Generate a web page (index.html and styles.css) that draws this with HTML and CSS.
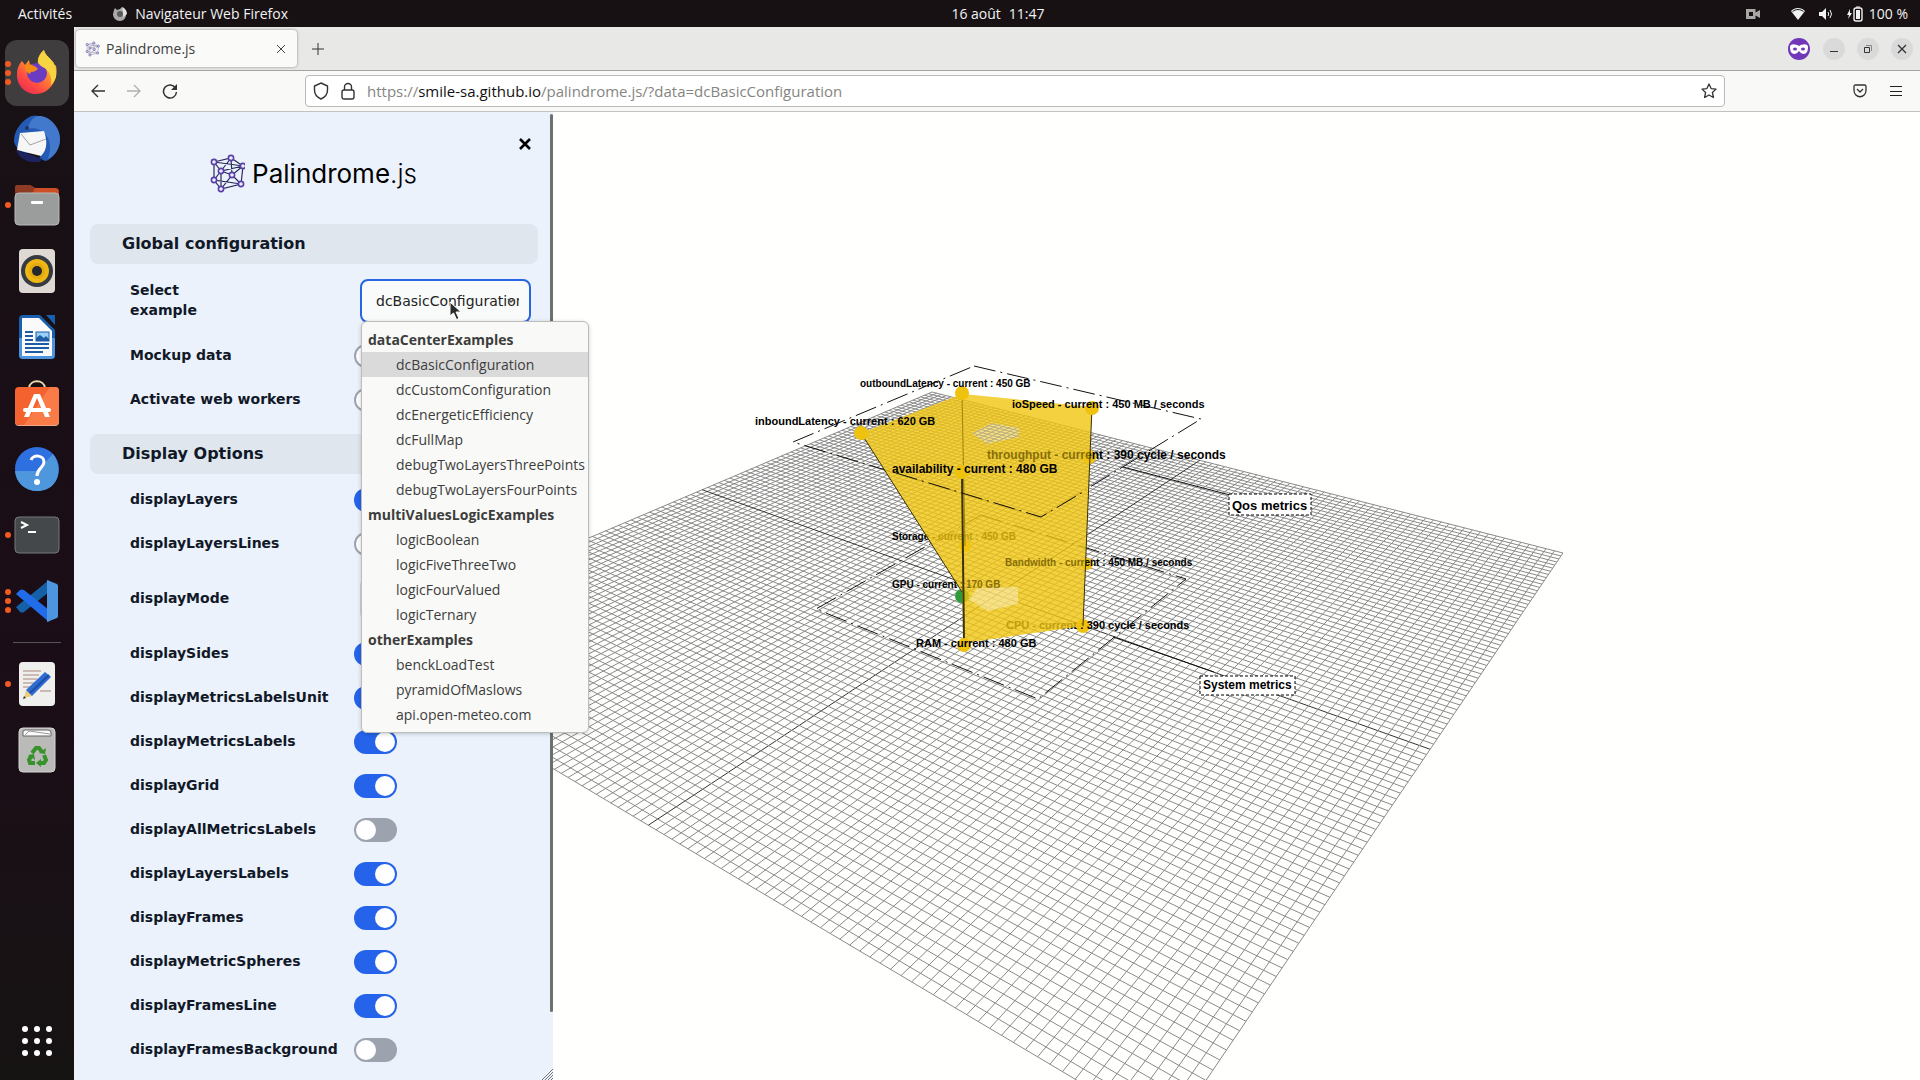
FILE: index.html
```html
<!DOCTYPE html>
<html lang="fr">
<head>
    <meta charset="utf-8">
    <title>Palindrome.js</title>
    <link rel="stylesheet" href="styles.css">
</head>
<body>
    <!-- system bar -->
    <header class="topbar">
        <div class="topbar-left">
            <button type="button" class="topbar-btn">Activités</button>
            <button type="button" class="topbar-btn topbar-app">
                <svg width="16" height="16" viewBox="0 0 16 16">
                    <path d="M2 4l1-2 2 2 3-1 2-2 1 2 3 3c1 5-2 9-6 9S1 12 1 8z" fill="#a9a9a9"/>
                    <path d="M10 1c3 1 5 4 5 7l-4 3V6z" fill="#e2e2e2"/>
                    <circle cx="8" cy="8" r="3" fill="#5b5b5b"/>
                </svg>
                Navigateur Web Firefox
            </button>
        </div>
        <button type="button" class="topbar-btn clock"><span>16 août</span><span>11:47</span></button>
        <div class="topbar-right">
            <svg class="cam" width="16" height="12" viewBox="0 0 16 12">
                <path d="M1 1h9.500v3.500L15 2v8l-4.500-2.500V11H1z" fill="#a9a8a6"/>
                <rect x="4" y="4" width="4" height="4" fill="#171114"/>
            </svg>
            <svg width="16" height="14" viewBox="0 0 16 14">
                <path d="M8 13L1 4c4-4 10-4 14 0z" fill="#f2f2f2"/>
                <path d="M2.500 4.500c3.500-2.600 7.500-2.600 11 0" fill="none" stroke="#171114"/>
            </svg>
            <svg width="16" height="14" viewBox="0 0 16 14">
                <path d="M1 5h3l4-4v12L4 9H1z" fill="#f2f2f2"/>
                <path d="M10 5q1.500 2 0 4M12 3q3 4 0 8" fill="none" stroke="#f2f2f2"/>
            </svg>
            <span class="battery">
                <svg width="17" height="16" viewBox="0 0 17 16">
                    <path d="M4 3L1 9h2l-1 4 4-6H4z" fill="#f2f2f2"/>
                    <rect x="8" y="2" width="8" height="13" rx="2" fill="none" stroke="#f2f2f2" stroke-width="1.400"/>
                    <rect x="10" y="4" width="4" height="9" fill="#f2f2f2"/>
                    <path d="M10 1h4" stroke="#f2f2f2"/>
                </svg>
                100 %
            </span>
        </div>
    </header>

    <div class="desktop">
        <nav class="dock">
            <a href="#" class="dock-item active" aria-label="Firefox">
                <span class="dots"><i></i><i></i><i></i></span>
                <svg width="44" height="48" viewBox="0 0 44 48">
                    <defs>
                        <linearGradient id="fox" x1="1" y1="0" x2="0.300" y2="1">
                            <stop offset="0" stop-color="#fde24a"/>
                            <stop offset="0.450" stop-color="#ff9a2c"/>
                            <stop offset="0.800" stop-color="#ff4a43"/>
                            <stop offset="1" stop-color="#ee3350"/>
                        </linearGradient>
                    </defs>
                    <path d="M7 12l3 4 4-5 1 5c3-1 6 0 8-1-1-6 2-11 6-14 1 5 5 7 8 11 1 1 2 1 2 3l2 2c3 13-6 28-20 28C9 45 1 35 2 24c0-4 2-9 5-12z" fill="url(#fox)"/>
                    <circle cx="22" cy="24" r="10" fill="#6b3bc2"/>
                    <path d="M10 16c4-2 8 0 11 2l2 2c-2 2-4 3-7 3l-1 2c-3-1-6-5-5-9z" fill="#f58a17"/>
                    <path d="M29 1c1 5 5 7 8 11 2 3 5 8 4 16-1 3-3 6-5 8 1-6 0-10-4-15-3-3-8-4-9-8 0-5 3-9 6-12z" fill="#f7d442"/>
                </svg>
            </a>
            <a href="#" class="dock-item" aria-label="Thunderbird">
                <svg width="48" height="50" viewBox="0 0 48 50">
                    <path d="M7 11C13 3 21 0 25 2c12 1 22 11 22 23 0 11-7 19-14 22l-7-2 4-8C15 42 4 38 1 28c0-7 2-12 6-17z" fill="#2459b4"/>
                    <path d="M25 2c10-1 22 10 22 23 0 9-5 17-12 20 2-8 4-16-2-24-4-6-12-8-18-6 1-7 5-12 10-13z" fill="#4379cc"/>
                    <path d="M7 19l24-2c3 9 4 18-3 25L4 36z" fill="#f6f6f6"/>
                    <path d="M8 20l9 11 16-6" fill="none" stroke="#a3a3a3"/>
                    <path d="M3 36l27 9-4 3C15 49 6 45 3 36z" fill="#1c2360"/>
                    <circle cx="14" cy="14" r="2" fill="#203a68"/>
                </svg>
            </a>
            <a href="#" class="dock-item" aria-label="Fichiers">
                <span class="dots"><i></i></span>
                <svg width="46" height="42" viewBox="0 0 46 42">
                    <path d="M1 12V4q0-3 3-3h12l5 3h20q4 0 4 4v8z" fill="#cc4f25"/>
                    <path d="M1 12V4q0-3 3-3h12l5 3-4 8z" fill="#8d3b25"/>
                    <rect x="1" y="9" width="44" height="32" rx="4" fill="#9b9c9c" stroke="#b9bbbb"/>
                    <rect x="17" y="17" width="12" height="3" rx="1" fill="#fff"/>
                </svg>
            </a>
            <a href="#" class="dock-item" aria-label="Rhythmbox">
                <svg width="38" height="46" viewBox="0 0 38 46">
                    <rect x="1" y="1" width="36" height="44" rx="4" fill="#dedad3"/>
                    <circle cx="19" cy="23" r="16" fill="#353b41"/>
                    <circle cx="19" cy="23" r="12" fill="#efb713"/>
                    <circle cx="19" cy="23" r="8" fill="#e5aa10"/>
                    <circle cx="19" cy="23" r="5" fill="#25282b"/>
                </svg>
            </a>
            <a href="#" class="dock-item" aria-label="LibreOffice Writer">
                <svg width="38" height="46" viewBox="0 0 38 46">
                    <path d="M5 1h17l15 15v25q0 4-4 4H5q-4 0-4-4V5q0-4 4-4z" fill="#1860ad"/>
                    <path d="M1 24v17q0 4 4 4h28q4 0 4-4V24z" fill="#4c94de"/>
                    <path d="M4 4h17l13 13v25H4z" fill="#fafafa"/>
                    <path d="M28 1h9v10z" fill="#1860ad"/>
                    <path d="M7 18h8M7 22h8M7 26h8M7 30h24M7 34h24M7 38h18" stroke="#1d5da8" stroke-width="2"/>
                    <rect x="18" y="18" width="13" height="9" fill="#9cd1f5" stroke="#1d5da8"/>
                    <path d="M18 27v-3l4-3 4 3 2-2 3 3v2z" fill="#1d5da8"/>
                </svg>
            </a>
            <a href="#" class="dock-item" aria-label="Ubuntu Software">
                <svg width="46" height="46" viewBox="0 0 46 46">
                    <path d="M15 8c1-9 15-9 16 0" fill="none" stroke="#efd9ad" stroke-width="2"/>
                    <rect x="1" y="7" width="44" height="38" rx="4" fill="#f4622f"/>
                    <path d="M10 45L36 7h5q4 0 4 4v30q0 4-4 4z" fill="#f97b48"/>
                    <path d="M1 40q0 5 4 5h36q4 0 4-5v2q0 4-4 4H5q-4 0-4-4z" fill="#f2a98b"/>
                    <path d="M20 14h6l10 23h-5l-8-19-8 19h-5z" fill="#fff"/>
                    <rect x="9" y="28" width="28" height="4" rx="2" fill="#fff"/>
                </svg>
            </a>
            <a href="#" class="dock-item" aria-label="Aide">
                <svg width="46" height="46" viewBox="0 0 46 46">
                    <circle cx="23" cy="23" r="22" fill="#2f70e0"/>
                    <path d="M1 25h22L39 8c10 13 7 37-16 37C11 45 2 37 1 25z" fill="#4f97dd"/>
                    <path d="M17 14c2-6 13-5 13 2 0 6-7 6-7 14" fill="none" stroke="#fff" stroke-width="3"/>
                    <circle cx="23" cy="36" r="3" fill="#fff"/>
                </svg>
            </a>
            <a href="#" class="dock-item" aria-label="Terminal">
                <span class="dots"><i></i></span>
                <svg width="46" height="38" viewBox="0 0 46 38">
                    <rect x="1" y="1" width="44" height="36" rx="4" fill="#45484a" stroke="#76797a"/>
                    <path d="M7 6l6 3-6 3M14 16h8" fill="none" stroke="#fff" stroke-width="2"/>
                </svg>
            </a>
            <a href="#" class="dock-item" aria-label="Visual Studio Code">
                <span class="dots"><i></i><i></i><i></i></span>
                <svg width="44" height="44" viewBox="0 0 44 44">
                    <path d="M1 28l4 5q2 1 4 0L34 13V1L1 28z" fill="#1560a6"/>
                    <path d="M1 15l4-4q2-1 4 0l25 20v12L1 15z" fill="#216ce8"/>
                    <path d="M32 1l10 4q1 1 1 2v30q0 1-1 2l-10 4z" fill="#4d95de"/>
                </svg>
            </a>
            <hr class="dock-sep">
            <a href="#" class="dock-item" aria-label="Éditeur de texte">
                <span class="dots"><i></i></span>
                <svg width="38" height="46" viewBox="0 0 38 46">
                    <rect x="1" y="1" width="36" height="44" rx="4" fill="#efefee"/>
                    <path d="M5 10h18M5 14h16M5 18h14M5 22h14M5 26h12M22 30h11" stroke="#cbb9b3" stroke-width="2"/>
                    <path d="M6 37l2-8 6 6z" fill="#eccb72"/>
                    <path d="M8 29l19-18 6 5-19 19z" fill="#2e6cd2"/>
                    <path d="M12 32l19-18" stroke="#1d4da4" stroke-width="2"/>
                    <path d="M5 38l1-3 2 2z" fill="#333"/>
                </svg>
            </a>
            <a href="#" class="dock-item" aria-label="Corbeille">
                <svg width="38" height="46" viewBox="0 0 38 46">
                    <rect x="1" y="1" width="36" height="44" rx="4" fill="#babbb9" stroke="#d6d7d5"/>
                    <path d="M5 9V5q0-2 2-2h23q3 0 3 3v3z" fill="#fafafa" stroke="#666"/>
                    <path d="M7 8l4-4 21 3" fill="none" stroke="#999"/>
                    <g fill="none" stroke="#38922c" stroke-width="4">
                        <path d="M14 26l4-5h3l3 4"/>
                        <path d="M26 28l2 5-2 3h-5"/>
                        <path d="M17 36h-5l-1-3 2-4"/>
                    </g>
                    <path d="M21 26l6 1 1-6zM23 32v8l-5-4zM10 28l6-1 1 6z" fill="#38922c"/>
                </svg>
            </a>
            <a href="#" class="dock-item dock-apps" aria-label="Afficher les applications">
                <svg width="32" height="32" viewBox="0 0 32 32" fill="#fff">
                    <circle cx="4" cy="4" r="3"/><circle cx="16" cy="4" r="3"/><circle cx="28" cy="4" r="3"/>
                    <circle cx="4" cy="16" r="3"/><circle cx="16" cy="16" r="3"/><circle cx="28" cy="16" r="3"/>
                    <circle cx="4" cy="28" r="3"/><circle cx="16" cy="28" r="3"/><circle cx="28" cy="28" r="3"/>
                </svg>
            </a>
        </nav>

        <div class="browser">
            <div class="tabstrip">
                <div class="tab">
                    <svg width="16" height="16" viewBox="208 151 37 41" fill="none" stroke="#8d93a3" stroke-width="1.500">
                        <use href="#mesh"/>
                    </svg>
                    <span class="tab-title">Palindrome.js</span>
                    <button type="button" class="icon-btn tab-close" aria-label="Fermer l'onglet">
                        <svg width="10" height="10" viewBox="0 0 10 10"><path d="M1 1l8 8M9 1L1 9" stroke="#444"/></svg>
                    </button>
                </div>
                <button type="button" class="icon-btn" aria-label="Nouvel onglet">
                    <svg width="12" height="12" viewBox="0 0 12 12"><path d="M6 0v12M0 6h12" stroke="#333"/></svg>
                </button>
                <div class="window-btns">
                    <svg width="24" height="24" viewBox="0 0 24 24">
                        <circle cx="12" cy="12" r="11" fill="#7038b8"/>
                        <path d="M3 10c0-4 6-3 9-1 3-2 9-3 9 1 0 9-6 8-9 4-3 4-9 5-9-4z" fill="#fff"/>
                        <ellipse cx="8" cy="12" rx="2" ry="1.500" fill="#7038b8"/>
                        <ellipse cx="16" cy="12" rx="2" ry="1.500" fill="#7038b8"/>
                    </svg>
                    <button type="button" class="win-btn" aria-label="Réduire">
                        <svg width="10" height="10" viewBox="0 0 10 10"><path d="M1 7.500h8" stroke="#333"/></svg>
                    </button>
                    <button type="button" class="win-btn" aria-label="Restaurer">
                        <svg width="10" height="10" viewBox="0 0 10 10" fill="none"><path d="M3 1.500h5.500V7" stroke="#888"/><path d="M1.500 3.500h5v5h-5z" stroke="#333"/></svg>
                    </button>
                    <button type="button" class="win-btn" aria-label="Fermer">
                        <svg width="10" height="10" viewBox="0 0 10 10"><path d="M1 1l8 8M9 1L1 9" stroke="#333" stroke-width="1.300"/></svg>
                    </button>
                </div>
            </div>

            <div class="toolbar">
                <div class="nav-btns">
                    <button type="button" class="icon-btn" aria-label="Précédent">
                        <svg width="16" height="16" viewBox="0 0 16 16" fill="none" stroke="#333" stroke-width="1.400"><path d="M15 8H2M8 2L2 8l6 6"/></svg>
                    </button>
                    <button type="button" class="icon-btn" aria-label="Suivant" disabled>
                        <svg width="16" height="16" viewBox="0 0 16 16" fill="none" stroke="#b0b0b0" stroke-width="1.400"><path d="M1 8h13M8 2l6 6-6 6"/></svg>
                    </button>
                    <button type="button" class="icon-btn" aria-label="Actualiser">
                        <svg width="16" height="16" viewBox="0 0 16 16" fill="none" stroke="#333" stroke-width="1.500"><path d="M13.500 5A6.500 6.500 0 1 0 14.500 9"/><path d="M15 1v6H9z" fill="#333" stroke="none"/></svg>
                    </button>
                </div>
                <div class="urlbar">
                    <svg width="16" height="18" viewBox="0 0 16 18" fill="none" stroke="#333" stroke-width="1.400"><path d="M8 1l6.500 3v4c0 4-2 7-6.500 9C3.500 15 1.500 12 1.500 8V4z"/></svg>
                    <svg width="14" height="18" viewBox="0 0 14 18" fill="none" stroke="#333" stroke-width="1.400"><rect x="1" y="8" width="12" height="9" rx="2"/><path d="M3.500 8V5a3.500 3.500 0 0 1 7 0v3"/></svg>
                    <a class="url" href="#">https://<b>smile-sa.github.io</b>/palindrome.js/?data=dcBasicConfiguration</a>
                    <button type="button" class="icon-btn" aria-label="Marquer cette page">
                        <svg width="16" height="16" viewBox="0 0 16 16" fill="none" stroke="#333" stroke-width="1.300" stroke-linejoin="round"><path d="M8 1l2.100 4.600 4.900.5-3.600 3.400 1 5L8 12l-4.400 2.500 1-5L1 6.100l4.900-.5z"/></svg>
                    </button>
                </div>
                <div class="tools">
                    <button type="button" class="icon-btn" aria-label="Pocket">
                        <svg width="14" height="14" viewBox="0 0 14 14" fill="none" stroke="#333" stroke-width="1.300"><path d="M2.500 1h9q1.500 0 1.500 1.500V6c0 9-12 9-12 0V2.500Q1 1 2.500 1z"/><path d="M4 5l3 3 3-3"/></svg>
                    </button>
                    <button type="button" class="icon-btn" aria-label="Menu">
                        <svg width="12" height="12" viewBox="0 0 12 12"><path d="M0 1.500h12M0 6.500h12M0 10.500h12" stroke="#222"/></svg>
                    </button>
                </div>
            </div>

            <main class="page">
                <!-- 3D scene: the grid lines are generated in script.js -->
                <svg class="scene" viewBox="74 112 1846 968" preserveAspectRatio="xMinYMin slice">
                    <clipPath id="topHole">
                        <path d="M972 433L992 423L1019 428V437L987 444Z"/>
                    </clipPath>

                    <g id="grid" class="grid-lines"></g>

                    <g class="frame-line">
                        <path d="M974 366L1201 419L1041 517L793 442Z"/>
                        <path d="M981 515L1186 579L1038 699L816 609Z"/>
                    </g>
                    <g class="leader">
                        <path d="M1123 467L1230 495M1113 637L1214 672"/>
                    </g>

                    <g class="sphere">
                        <circle cx="965" cy="546" r="6"/>
                        <circle cx="1087" cy="564" r="6"/>
                        <circle cx="1089" cy="457" r="7"/>
                        <circle cx="1083" cy="626" r="7"/>
                        <circle cx="962" cy="596" r="7" class="sphere-ok"/>
                    </g>
                    <g class="metric">
                        <text x="892" y="540" class="s10">Storage - current : 450 GB</text>
                        <text x="1006" y="629" class="s11">CPU - current : 390 cycle / seconds</text>
                    </g>
                    <path class="side" d="M861 433L962 394L1092 407L1083 626L964 643L962 592Z"/>
                    <path class="edge" d="M962 394L965 546"/>
                    <g class="metric">
                        <text x="987" y="459" class="s12">throughput - current : 390 cycle / seconds</text>
                        <text x="1005" y="566" class="s10">Bandwidth - current : 450 MB / seconds</text>
                        <text x="892" y="588" class="s10">GPU - current : 170 GB</text>
                    </g>
                    <path class="side" d="M861 433L962 394L1092 407L1083 626L964 643L962 592Z"/>
                    <path class="hole" d="M972 433L992 423L1019 428V437L987 444Z"/>
                    <use href="#grid" clip-path="url(#topHole)" opacity="0.5"/>
                    <path class="hole" d="M969 600L977 588L1018 587V604L988 611Z"/>
                    <path class="edge" d="M861 433L962 592M1092 407L1083 626"/>
                    <path class="edge edge-front" d="M962 472L964 643"/>
                    <path class="frame-line" d="M896 473L1041 517L1083 492"/>
                    <g class="sphere">
                        <circle cx="962" cy="393" r="7"/>
                        <circle cx="1092" cy="408" r="7"/>
                        <circle cx="962" cy="472" r="7"/>
                        <circle cx="861" cy="433" r="7"/>
                        <circle cx="964" cy="645" r="7"/>
                    </g>
                    <g class="metric">
                        <text x="860" y="387" class="s10">outboundLatency - current : 450 GB</text>
                        <text x="1012" y="408" class="s11">ioSpeed - current : 450 MB / seconds</text>
                        <text x="755" y="425" class="s11">inboundLatency - current : 620 GB</text>
                        <text x="892" y="473" class="s12">availability - current : 480 GB</text>
                        <text x="916" y="647" class="s11">RAM - current : 480 GB</text>
                    </g>
                    <g class="layer-label">
                        <rect x="1229" y="494" width="82" height="21"/>
                        <text x="1232" y="510" class="s13">Qos metrics</text>
                        <rect x="1200" y="676" width="95" height="19"/>
                        <text x="1203" y="689" class="s12">System metrics</text>
                    </g>
                </svg>

                <aside class="panel">
                    <form class="panel-body">
                        <button type="button" class="panel-close" aria-label="Close">
                            <svg width="14" height="14" viewBox="0 0 14 14"><path d="M2 2l10 10M12 2L2 12" stroke="#000" stroke-width="2.600"/></svg>
                        </button>
                        <div class="logo">
                            <svg width="37" height="41" viewBox="208 151 37 41" fill="none" stroke="#2b2b5c" stroke-width="1.200">
                                <g id="mesh">
                                    <path d="M214 160L231 156L243 164L241 182L221 187L214 178ZM214 160L243 164L221 169L214 160M231 156L221 169L214 178L241 182L232 173L243 164M221 169L221 187L232 173L221 169M231 156L232 173"/>
                                    <g class="mesh-node">
                                        <circle cx="214" cy="160" r="2.600"/><circle cx="231" cy="156" r="2.600"/>
                                        <circle cx="243" cy="164" r="2.600"/><circle cx="221" cy="169" r="2.600"/>
                                        <circle cx="232" cy="173" r="2.600"/><circle cx="214" cy="178" r="2.600"/>
                                        <circle cx="241" cy="182" r="2.600"/><circle cx="221" cy="187" r="2.600"/>
                                    </g>
                                </g>
                            </svg>
                            <span class="logo-text">Palindrome<span class="logo-js">.js</span></span>
                        </div>

                        <h2 class="section">Global configuration</h2>
                        <div class="row row-select">
                            <label for="example">Select<br>example</label>
                            <div class="select-wrap">
                                <select id="example" class="select focused">
                                    <option>dcBasicConfiguration</option>
                                </select>
                                <svg class="chevron" width="8" height="6" viewBox="0 0 8 6"><path d="M1 1l3 3 3-3" fill="none" stroke="#555" stroke-width="1.400"/></svg>
                                <ul class="popup" role="listbox">
                                    <li class="popup-group">dataCenterExamples</li>
                                    <li class="popup-item selected">dcBasicConfiguration</li>
                                    <li class="popup-item">dcCustomConfiguration</li>
                                    <li class="popup-item">dcEnergeticEfficiency</li>
                                    <li class="popup-item">dcFullMap</li>
                                    <li class="popup-item">debugTwoLayersThreePoints</li>
                                    <li class="popup-item">debugTwoLayersFourPoints</li>
                                    <li class="popup-group">multiValuesLogicExamples</li>
                                    <li class="popup-item">logicBoolean</li>
                                    <li class="popup-item">logicFiveThreeTwo</li>
                                    <li class="popup-item">logicFourValued</li>
                                    <li class="popup-item">logicTernary</li>
                                    <li class="popup-group">otherExamples</li>
                                    <li class="popup-item">benckLoadTest</li>
                                    <li class="popup-item">pyramidOfMaslows</li>
                                    <li class="popup-item">api.open-meteo.com</li>
                                </ul>
                                <svg class="cursor" width="14" height="20" viewBox="0 0 14 20"><path d="M1 1v14l3.500-3 3 6.500 2.500-1-3-6.500h5z" fill="#2b2b2b" stroke="#fff"/></svg>
                            </div>
                        </div>
                        <div class="row"><label for="mockup">Mockup data</label><input type="checkbox" class="toggle" id="mockup"></div>
                        <div class="row"><label for="workers">Activate web workers</label><input type="checkbox" class="toggle" id="workers"></div>

                        <h2 class="section">Display Options</h2>
                        <div class="row"><label for="layers">displayLayers</label><input type="checkbox" class="toggle" id="layers" checked></div>
                        <div class="row"><label for="layersLines">displayLayersLines</label><input type="checkbox" class="toggle" id="layersLines"></div>
                        <div class="row row-select">
                            <label for="mode">displayMode</label>
                            <div class="select-wrap">
                                <select id="mode" class="select">
                                    <option>dynamic</option>
                                </select>
                            </div>
                        </div>
                        <div class="row"><label for="sides">displaySides</label><input type="checkbox" class="toggle" id="sides" checked></div>
                        <div class="row"><label for="unit">displayMetricsLabelsUnit</label><input type="checkbox" class="toggle" id="unit" checked></div>
                        <div class="row"><label for="metrics">displayMetricsLabels</label><input type="checkbox" class="toggle" id="metrics" checked></div>
                        <div class="row"><label for="showGrid">displayGrid</label><input type="checkbox" class="toggle" id="showGrid" checked></div>
                        <div class="row"><label for="allMetrics">displayAllMetricsLabels</label><input type="checkbox" class="toggle" id="allMetrics"></div>
                        <div class="row"><label for="layersLabels">displayLayersLabels</label><input type="checkbox" class="toggle" id="layersLabels" checked></div>
                        <div class="row"><label for="frames">displayFrames</label><input type="checkbox" class="toggle" id="frames" checked></div>
                        <div class="row"><label for="spheres">displayMetricSpheres</label><input type="checkbox" class="toggle" id="spheres" checked></div>
                        <div class="row"><label for="framesLine">displayFramesLine</label><input type="checkbox" class="toggle" id="framesLine" checked></div>
                        <div class="row"><label for="framesBg">displayFramesBackground</label><input type="checkbox" class="toggle" id="framesBg"></div>
                    </form>
                    <div class="scrollbar"><div class="scroll-thumb"></div></div>
                    <svg class="grip" width="11" height="11" viewBox="0 0 11 11"><path d="M0 11L11 0M3 11l8-8M6 11l5-5M9 11l2-2" stroke="#777"/></svg>
                </aside>
            </main>
        </div>
    </div>

    <script src="script.js"></script>
</body>
</html>
```
FILE: styles.css
```css
* {
    box-sizing: border-box;
}

body {
    margin: 0;
    height: 100vh;
    display: flex;
    flex-direction: column;
    overflow: hidden;
    font-family: "Open Sans", "Noto Sans", sans-serif;
    font-size: 14px;
    color: #3d3d3d;
}

button {
    font: inherit;
    color: inherit;
    background: none;
    border: none;
    padding: 0;
}

svg {
    display: block;
    flex: none;
}

/* system bar */
.topbar {
    flex: none;
    height: 27px;
    display: grid;
    grid-template-columns: 1fr auto 1fr;
    align-items: center;
    padding: 0 12px 0 18px;
    background: #171114;
    color: #f2f2f2;
}

.topbar-left,
.topbar-right,
.topbar-app,
.battery,
.clock {
    display: flex;
    align-items: center;
}

.topbar-left {
    gap: 40px;
}

.topbar-app {
    gap: 7px;
}

.clock {
    gap: 8px;
    margin-left: 70px;
}

.topbar-right {
    justify-content: flex-end;
    gap: 12px;
}

.cam {
    margin-right: 17px;
}

.battery {
    gap: 6px;
}

.desktop {
    flex: 1;
    min-height: 0;
    display: flex;
}

/* dock */
.dock {
    flex: none;
    width: 74px;
    padding: 13px 0 6px;
    display: flex;
    flex-direction: column;
    align-items: center;
    background: linear-gradient(#171114, #1b0d17 60%, #161313);
}

.dock-item {
    position: relative;
    width: 64px;
    height: 66px;
    display: flex;
    align-items: center;
    justify-content: center;
}

.active {
    background: #3f3d3e;
    border-radius: 12px;
}

.dots {
    position: absolute;
    left: 0;
    top: 0;
    height: 100%;
    display: flex;
    flex-direction: column;
    justify-content: center;
    gap: 3px;
}

.dots i {
    width: 6px;
    height: 6px;
    border-radius: 50%;
    background: #f25a22;
}

.dock-sep {
    width: 48px;
    margin: 8px 0;
    border: none;
    border-top: 1px solid #555;
}

.dock-apps {
    margin-top: auto;
}

/* browser chrome */
.browser {
    flex: 1;
    min-width: 0;
    display: flex;
    flex-direction: column;
    background: #fff;
}

.tabstrip {
    flex: none;
    height: 44px;
    display: flex;
    align-items: center;
    gap: 15px;
    padding: 0 7px 0 2px;
    background: #e8e8e7;
    border-bottom: 1px solid #a5a5a5;
}

.tab {
    width: 221px;
    height: 37px;
    display: flex;
    align-items: center;
    gap: 6px;
    padding: 0 11px 0 8px;
    background: #fafaf9;
    border-radius: 4px;
    box-shadow: 0 0 3px rgba(0, 0, 0, 0.4);
}

.tab-title {
    flex: 1;
}

.icon-btn {
    display: flex;
    align-items: center;
    justify-content: center;
}

.window-btns {
    margin-left: auto;
    display: flex;
    align-items: center;
    gap: 12px;
}

.win-btn {
    width: 22px;
    height: 22px;
    border-radius: 50%;
    background: #dadada;
    display: flex;
    align-items: center;
    justify-content: center;
}

.toolbar {
    flex: none;
    height: 41px;
    display: flex;
    align-items: center;
    padding: 0 18px 0 16px;
    background: #f9f9f8;
    border-bottom: 1px solid #c2c2c2;
}

.nav-btns {
    width: 215px;
    display: flex;
    gap: 20px;
}

.urlbar {
    flex: 1;
    height: 32px;
    display: flex;
    align-items: center;
    padding: 0 7px;
    gap: 12px;
    background: #fff;
    border: 1px solid #b9b9b9;
    border-radius: 4px;
}

.url {
    flex: 1;
    font-size: 15px;
    color: #85857f;
    text-decoration: none;
}

.url b {
    font-weight: normal;
    color: #111;
}

.tools {
    width: 177px;
    display: flex;
    justify-content: flex-end;
    align-items: center;
    gap: 23px;
}

/* page */
.page {
    flex: 1;
    min-height: 0;
    position: relative;
    display: flex;
    background: #fffffe;
}

.scene {
    position: absolute;
    left: 0;
    top: 0;
    width: 100%;
    height: 100%;
}

.grid-lines line {
    stroke: #8a8a8a;
    stroke-width: 1;
}

.grid-lines .axis {
    stroke: #333;
}

.frame-line {
    fill: none;
    stroke: #111;
    stroke-width: 1;
    stroke-dasharray: 22 5 2 5;
}

.leader {
    stroke: #111;
}

.side {
    fill: #f1c40f;
    fill-opacity: 0.55;
}

.hole {
    fill: #fff;
    fill-opacity: 0.35;
}

.edge {
    fill: none;
    stroke: #3a3208;
    stroke-width: 1;
}

.edge-front {
    stroke-width: 2;
}

.sphere {
    fill: #efc20e;
}

.sphere-ok {
    fill: #2f9a3a;
}

.metric,
.layer-label {
    font-family: "Liberation Sans", Arial, sans-serif;
    font-weight: bold;
    fill: #000;
}

.s10 { font-size: 10px; }
.s11 { font-size: 11px; }
.s12 { font-size: 12px; }
.s13 { font-size: 13px; }

.layer-label rect {
    fill: #fff;
    stroke: #000;
    stroke-dasharray: 3 2;
}

/* configuration panel */
.panel {
    position: relative;
    flex: none;
    width: 479px;
    display: flex;
    background: #ebf2fc;
    font-family: "DejaVu Sans", sans-serif;
    color: #111827;
}

.panel-body {
    flex: 1;
    min-width: 0;
    height: 100%;
    display: flex;
    flex-direction: column;
    padding: 25px 12px 0 16px;
}

.panel-close {
    align-self: flex-end;
    margin-right: 6px;
}

.logo {
    display: flex;
    justify-content: center;
    align-items: center;
    gap: 7px;
    margin: 2px 3px 30px 0;
}

.mesh-node {
    fill: #ebf2fc;
    stroke: #5b3fa8;
    stroke-width: 1.600;
}

.logo-text {
    font-family: Inter, sans-serif;
    font-size: 26px;
    line-height: 40px;
    color: #000;
}

.logo-js {
    font-weight: 300;
}

.section {
    flex: none;
    height: 40px;
    margin: 0 0 3px;
    padding-left: 32px;
    line-height: 40px;
    font-size: 16px;
    background: #dfe6ee;
    border-radius: 8px;
}

.row + .section {
    margin-top: 13px;
}

.row {
    flex: none;
    height: 44px;
    display: grid;
    grid-template-columns: 224px 1fr;
    align-items: center;
    padding: 0 7px 0 40px;
    font-size: 14px;
    line-height: 20px;
}

.row label {
    font-weight: bold;
}

.row-select {
    height: 66px;
}

.select-wrap {
    position: relative;
    margin: 2px 0 0 6px;
}

.select {
    display: block;
    width: 100%;
    height: 44px;
    padding: 0 10px 0 14px;
    font-family: inherit;
    font-size: 14px;
    color: #222;
    background: #f9fafa;
    border: 1px solid #d1d5db;
    border-radius: 8px;
    appearance: none;
}

.focused {
    border: 2px solid #2766e0;
}

.chevron {
    position: absolute;
    right: 16px;
    top: 19px;
}

.cursor {
    position: absolute;
    left: 89px;
    top: 22px;
}

.popup {
    position: absolute;
    z-index: 2;
    left: 1px;
    top: 42px;
    width: 228px;
    margin: 0;
    padding: 5px 0;
    list-style: none;
    background: #f9f9f7;
    border: 1px solid #bdbdbb;
    border-radius: 6px;
    box-shadow: 0 1px 4px rgba(0, 0, 0, 0.2);
    font-family: "Open Sans", "Noto Sans", sans-serif;
    line-height: 25px;
    color: #3d3d3d;
    white-space: nowrap;
}

.popup-group {
    padding-left: 6px;
    font-weight: bold;
}

.popup-item {
    padding-left: 34px;
}

.selected {
    background: #dadada;
}

.toggle {
    appearance: none;
    width: 43px;
    height: 24px;
    margin: 2px 0 0;
    padding: 2px;
    border-radius: 12px;
    background: #9ca3af;
    display: flex;
}

.toggle::before {
    content: "";
    width: 20px;
    height: 20px;
    border-radius: 50%;
    background: #fff;
}

.toggle:checked {
    background: #2563eb;
    justify-content: flex-end;
}

.scrollbar {
    width: 3px;
    padding-top: 2px;
}

.scroll-thumb {
    height: 93%;
    background: #6f6f70;
    border-radius: 2px;
}

.grip {
    position: absolute;
    right: 0;
    bottom: 0;
}
```
FILE: script.js
```js
// ground plane corners on screen: back, right, front, left
var corners = [[932, 392], [1563, 553], [1169, 1135], [342, 643]];
var divisions = 100;

// square -> quad projection
function projector(p) {
    var dx1 = p[1][0] - p[2][0], dx2 = p[3][0] - p[2][0];
    var dy1 = p[1][1] - p[2][1], dy2 = p[3][1] - p[2][1];
    var sx = p[0][0] - p[1][0] + p[2][0] - p[3][0];
    var sy = p[0][1] - p[1][1] + p[2][1] - p[3][1];
    var det = dx1 * dy2 - dx2 * dy1;
    var g = (sx * dy2 - dx2 * sy) / det;
    var h = (dx1 * sy - sx * dy1) / det;
    return function (u, v) {
        var w = g * u + h * v + 1;
        return [
            ((p[1][0] - p[0][0] + g * p[1][0]) * u + (p[3][0] - p[0][0] + h * p[3][0]) * v + p[0][0]) / w,
            ((p[1][1] - p[0][1] + g * p[1][1]) * u + (p[3][1] - p[0][1] + h * p[3][1]) * v + p[0][1]) / w
        ];
    };
}

var project = projector(corners);
var grid = document.getElementById('grid');

function addLine(a, b, axis) {
    var line = document.createElementNS('http://www.w3.org/2000/svg', 'line');
    line.setAttribute('x1', a[0]);
    line.setAttribute('y1', a[1]);
    line.setAttribute('x2', b[0]);
    line.setAttribute('y2', b[1]);
    if (axis) {
        line.setAttribute('class', 'axis');
    }
    grid.appendChild(line);
}

for (var i = 0; i <= divisions; i++) {
    var t = i / divisions;
    var axis = i === divisions / 2;
    addLine(project(t, 0), project(t, 1), axis);
    addLine(project(0, t), project(1, t), axis);
}
```
